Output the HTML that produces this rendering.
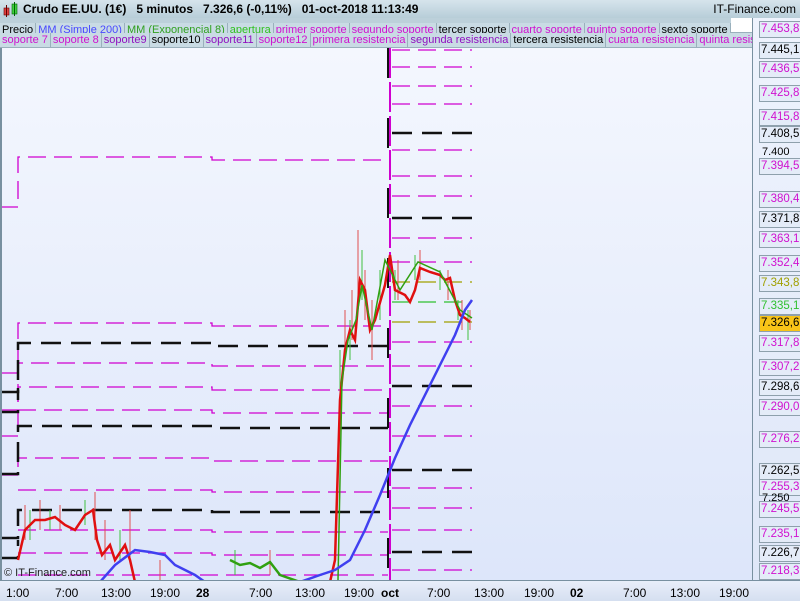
<!DOCTYPE html>
<html><head><meta charset="utf-8"><style>
body{margin:0;width:800px;height:600px;overflow:hidden;font-family:"Liberation Sans",sans-serif;background:#e8eefa;position:relative}
#top{position:absolute;left:0;top:0;width:800px;height:18px;background:linear-gradient(#d6e4ec,#b7cdd8);font-size:12px;font-weight:bold}
.row{position:absolute;left:0;height:15px;font-size:11px;white-space:nowrap;background:#bcd0da;overflow:hidden}
.row span{display:inline-block;height:14px;line-height:14px;padding:0 2px;border-right:1px solid #9ab0bc;border-bottom:1px solid #9ab0bc;background:#c9dbe4}
#plot{position:absolute;left:0;top:48px;width:752px;height:532px;background:linear-gradient(#f4f7fe,#dde6fa);border-left:2px solid #7890a0;overflow:hidden}
#axis{position:absolute;left:752px;top:18px;width:48px;height:562px;background:linear-gradient(#eef3fd,#dfe7f8);border-left:1px solid #7890a0}
.lb{position:absolute;left:6px;width:39px;height:15px;line-height:15px;font-size:11.5px;background:#e4ecf8;border:1px solid #8ea0ac;text-align:left;padding-left:1px;overflow:hidden;white-space:nowrap}
.pl{position:absolute;left:9px;font-size:11px;color:#000}
#bot{position:absolute;left:0;top:580px;width:800px;height:20px;background:linear-gradient(#e8eefa,#d5dff0);border-top:1px solid #7890a0;font-size:12px}
#bot span{position:absolute;top:5px}
</style></head><body>
<div id="top">
<svg style="position:absolute;left:3px;top:2px" width="18" height="16"><rect x="1" y="6" width="5" height="7" fill="#e04040" stroke="#600" stroke-width="0.6"/><line x1="3.5" y1="3" x2="3.5" y2="15" stroke="#600"/><rect x="9" y="2" width="5" height="10" fill="#40d040" stroke="#060" stroke-width="0.6"/><line x1="11.5" y1="0" x2="11.5" y2="14" stroke="#060"/></svg>
<span style="position:absolute;left:23px;top:2px">Crudo EE.UU. (1€) &nbsp;&nbsp;5 minutos &nbsp;&nbsp;7.326,6 (-0,11%) &nbsp;&nbsp;01-oct-2018 11:13:49</span>
<span style="position:absolute;right:4px;top:2px;font-weight:normal">IT-Finance.com</span>
</div>
<div class="row" style="top:18px;width:752px">
<span style="color:#000">Precio</span><span style="color:#4848ff">MM (Simple 200)</span><span style="color:#30a020">MM (Exponencial 8)</span><span style="color:#30c020">apertura</span><span style="color:#d010d0">primer soporte</span><span style="color:#d010d0">segundo soporte</span><span>tercer soporte</span><span style="color:#d010d0">cuarto soporte</span><span style="color:#d010d0">quinto soporte</span><span>sexto soporte</span><span style="background:#fff;width:30px"></span>
</div>
<div class="row" style="top:33px;width:752px">
<span style="color:#d010d0">soporte 7</span><span style="color:#d010d0">soporte 8</span><span style="color:#9010c0">soporte9</span><span>soporte10</span><span style="color:#9010c0">soporte11</span><span style="color:#d010d0">soporte12</span><span style="color:#d010d0">primera resistencia</span><span style="color:#9010c0">segunda resistencia</span><span>tercera resistencia</span><span style="color:#d010d0">cuarta resistencia</span><span style="color:#d010d0">quinta resistencia</span>
</div>
<div id="plot">
<svg width="752" height="532" style="position:absolute;left:-2px;top:0" viewBox="0 48 752 532">
<g fill="none" stroke-width="1.3" stroke="#d000d0" stroke-dasharray="18,8">
<path d="M0 207H18V157H212V160H388"/>
<path d="M0 373H18V323H212V326H388"/>
<path d="M0 410H18V363H212V366H388"/>
<path d="M0 436H18V387H212V390H388"/>
<path d="M18 410H212V413H388"/>
<path d="M0 475H18V458H212V461H388"/>
<path d="M18 490H212V492H388"/>
<path d="M18 530H212V532H388"/>
<path d="M18 553H212V555H388"/>
<path d="M18 575H388"/>
<path d="M392 50H472M392 67H472M392 86H472M392 104H472M392 150H472M392 176H472M392 196H472M392 238H472M392 262H472M392 342H472M392 366H472M392 406H472M392 436H472M392 488H472M392 508H472M392 530H472M392 570H472"/>
</g>
<g fill="none" stroke-width="1.3" stroke="#a0a000" stroke-dasharray="18,8"><path d="M392 282H472M392 322H472"/></g>
<g fill="none" stroke-width="1.3" stroke="#30c030" stroke-dasharray="18,8"><path d="M392 302H472"/></g>
<g fill="none" stroke-width="2.5" stroke="#111" stroke-dasharray="20,10">
<path d="M0 392H18V343H212V346H388"/>
<path d="M0 412H18V388"/>
<path d="M0 474H18V426H212V428H388"/>
<path d="M0 538H18V510H212V512H388"/>
<path d="M0 558H18V540"/>
<path d="M392 133H472M392 218H472M392 386H472M392 470H472M392 552H472"/>
</g>
<line x1="390" y1="48" x2="390" y2="580" stroke="#d000d0" stroke-width="2" stroke-dasharray="30,4"/>
<line x1="388" y1="48" x2="388" y2="580" stroke="#111" stroke-width="2" stroke-dasharray="30,40"/>
<g stroke="#e05050" stroke-width="1"><path d="M25 505V540M40 500V530M60 505V530M95 492V540M105 520V560M130 510V560M160 560V580M270 550V575M345 310V360M352 290V340M358 230V300M365 270V320M372 300V360M398 260V300M420 250V280M448 270V300M462 300V330M470 310V330"/></g>
<g stroke="#40c040" stroke-width="1"><path d="M30 510V540M50 510V530M85 500V525M120 530V560M235 550V575M340 350V400M350 320V360M362 250V300M380 270V320M395 270V300M415 255V280M440 270V290M458 300V320M468 310V340"/></g>
<polyline fill="none" stroke="#e01010" stroke-width="2.5" points="18,560 25,530 35,520 45,520 55,517 65,525 75,530 85,515 93,510 97,540 102,555 110,545 115,560 125,545 130,560 135,582"/>
<polyline fill="none" stroke="#30a010" stroke-width="2.5" points="230,560 240,565 250,563 260,568 270,562 280,575 300,582"/>
<polyline fill="none" stroke="#e01010" stroke-width="2.5" points="330,582 335,560 340,400 345,350 350,330 355,340 360,280 365,290 370,330 375,320 385,285 390,255 395,290 405,295 410,302 415,290 420,268 425,270 430,272 440,275 445,280 450,278 455,300 460,315 465,318 470,322"/>
<polyline fill="none" stroke="#30a010" stroke-width="1.5" points="338,580 342,380 348,340 356,320 362,285 372,330 385,260 400,290 418,262 440,272 460,310 472,318"/>
<polyline fill="none" stroke="#4040f0" stroke-width="2.5" points="100,582 115,565 135,550 150,552 165,555 175,565 195,575 205,582"/>
<polyline fill="none" stroke="#4040f0" stroke-width="2.5" points="300,582 320,575 335,570 350,560 365,530 380,495 395,458 410,425 425,395 440,365 455,335 465,310 472,300"/>
</svg>
<div style="position:absolute;left:2px;top:519px;font-size:11px;color:#222">© IT-Finance.com</div>
</div>
<div id="axis">
<div class="lb" style="top:3px;color:#d010d0">7.453,8</div>
<div class="lb" style="top:24px">7.445,1</div>
<div class="lb" style="top:43px;color:#d010d0">7.436,5</div>
<div class="lb" style="top:67px;color:#d010d0">7.425,8</div>
<div class="lb" style="top:91px;color:#d010d0">7.415,8</div>
<div class="lb" style="top:108px">7.408,5</div>
<div class="pl" style="top:128px">7.400</div>
<div class="lb" style="top:140px;color:#d010d0">7.394,5</div>
<div class="lb" style="top:173px;color:#d010d0">7.380,4</div>
<div class="lb" style="top:193px">7.371,8</div>
<div class="lb" style="top:213px;color:#d010d0">7.363,1</div>
<div class="lb" style="top:237px;color:#d010d0">7.352,4</div>
<div class="lb" style="top:257px;color:#a0a000">7.343,8</div>
<div class="lb" style="top:280px;color:#30c030">7.335,1</div>
<div class="lb" style="top:297px;background:#f8c418">7.326,6</div>
<div class="lb" style="top:317px;color:#d010d0">7.317,8</div>
<div class="lb" style="top:341px;color:#d010d0">7.307,2</div>
<div class="lb" style="top:361px">7.298,6</div>
<div class="lb" style="top:381px;color:#d010d0">7.290,0</div>
<div class="lb" style="top:413px;color:#d010d0">7.276,2</div>
<div class="lb" style="top:445px">7.262,5</div>
<div class="lb" style="top:461px;color:#d010d0">7.255,3</div>
<div class="pl" style="top:474px">7.250</div>
<div class="lb" style="top:483px;color:#d010d0">7.245,5</div>
<div class="lb" style="top:508px;color:#d010d0">7.235,1</div>
<div class="lb" style="top:527px">7.226,7</div>
<div class="lb" style="top:545px;color:#d010d0">7.218,3</div>
</div>
<div id="bot">
<span style="left:6px">1:00</span><span style="left:55px">7:00</span><span style="left:101px">13:00</span><span style="left:150px">19:00</span><span style="left:196px;font-weight:bold">28</span><span style="left:249px">7:00</span><span style="left:295px">13:00</span><span style="left:344px">19:00</span><span style="left:381px;font-weight:bold">oct</span><span style="left:427px">7:00</span><span style="left:474px">13:00</span><span style="left:524px">19:00</span><span style="left:570px;font-weight:bold">02</span><span style="left:623px">7:00</span><span style="left:670px">13:00</span><span style="left:719px">19:00</span>
</div>
</body></html>
